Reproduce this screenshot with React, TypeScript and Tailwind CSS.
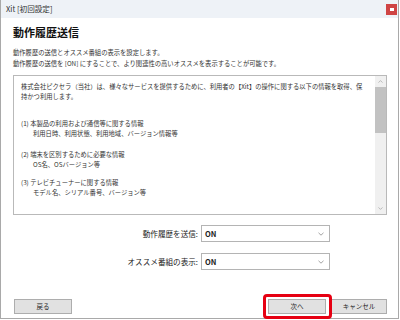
import React from 'react';

const Chevron: React.FC = () => (
  <svg width="6" height="4" viewBox="0 0 6 4" className="text-[#8a8a8a]">
    <path d="M0.5 0.8 L3 3.2 L5.5 0.8" fill="none" stroke="currentColor" strokeWidth="0.8" />
  </svg>
);

const SelectBox: React.FC<{ label: string; value: string }> = ({ label, value }) => (
  <div className="flex items-center justify-end pr-[68px]">
    <span className="text-[7.6px] text-[#222] mr-[3px]">{label}</span>
    <div className="w-[129px] h-[17px] border border-[#b4b4b4] bg-white flex items-center justify-between pl-[3px] pr-[5px]">
      <span className="text-[7.5px] font-bold text-[#222]">{value}</span>
      <Chevron />
    </div>
  </div>
);

const Btn: React.FC<{ children: React.ReactNode; w: string }> = ({ children, w }) => (
  <div className={`${w} h-[15px] bg-[#e1e1e1] border border-[#adadad] flex items-center justify-center text-[6.5px] text-[#222]`}>
    {children}
  </div>
);

const App: React.FC = () => {
  return (
    <div className="w-[400px] h-[320px] bg-white font-['Noto_Sans_CJK_JP',sans-serif] text-[#333] overflow-hidden">
      <div className="w-[399px] h-[319px] border-l border-r border-b border-[#a9a9a9] flex flex-col">
        {/* title bar */}
        <div className="h-[18px] bg-[#eef2f7] flex items-center justify-between pl-[5px] pr-[1px]">
          <span className="text-[7.6px] text-[#333]">Xit [初回設定]</span>
          <div className="w-[11px] h-[11px] bg-[#cf4444] flex items-center justify-center">
            <div className="w-[4px] h-[3px] bg-white" />
          </div>
        </div>

        <div className="px-[12px] flex flex-col">
          <h1 className="mt-[9px] text-[11px] leading-[11px] font-bold text-[#111]">動作履歴送信</h1>
          <div className="mt-[9px] text-[6.3px] leading-[11px] text-[#333] whitespace-nowrap">
            <div>動作履歴の送信とオススメ番組の表示を設定します。</div>
            <div>動作履歴の送信を [ON] にすることで、より関連性の高いオススメを表示することが可能です。</div>
          </div>

          {/* text box */}
          <div className="mt-[6px] h-[140px] w-[374px] border border-[#b9b9b9] flex">
            <div className="flex-1 pl-[7px] pt-[6px] text-[6.3px] leading-[10px] text-[#333] whitespace-nowrap">
              <div>株式会社ピクセラ（当社）は、様々なサービスを提供するために、利用者の【Xit】の操作に関する以下の情報を取得、保</div>
              <div>持かつ利用します。</div>
              <div className="mt-[17px]">(1) 本製品の利用および通信等に関する情報</div>
              <div className="pl-[12px]">利用日時、利用状態、利用地域、バージョン情報等</div>
              <div className="mt-[11px]">(2) 端末を区別するために必要な情報</div>
              <div className="pl-[12px]">OS名、OSバージョン等</div>
              <div className="mt-[8px]">(3) テレビチューナーに関する情報</div>
              <div className="pl-[12px]">モデル名、シリアル番号、バージョン等</div>
            </div>
            <div className="w-[11px] bg-[#f0f0f0] flex flex-col items-center">
              <div className="h-[11px] flex items-center justify-center">
                <svg width="5" height="3" viewBox="0 0 5 3"><path d="M0.5 2.6 L2.5 0.6 L4.5 2.6" fill="none" stroke="#a3a3a3" strokeWidth="0.7" /></svg>
              </div>
              <div className="w-[11px] h-[46px] bg-[#c2c2c2]" />
              <div className="flex-1" />
              <div className="h-[11px] flex items-center justify-center">
                <svg width="5" height="3" viewBox="0 0 5 3"><path d="M0.5 0.4 L2.5 2.4 L4.5 0.4" fill="none" stroke="#a3a3a3" strokeWidth="0.7" /></svg>
              </div>
            </div>
          </div>
        </div>

        <div className="mt-[10px] flex flex-col gap-[11px]">
          <SelectBox label="動作履歴を送信:" value="ON" />
          <SelectBox label="オススメ番組の表示:" value="ON" />
        </div>

        <div className="mt-[29px] flex items-center pl-[13px] pr-[11px]">
          <Btn w="w-[58px]">戻る</Btn>
          <div className="flex-1" />
          <div className="relative">
            <Btn w="w-[58px]">次へ</Btn>
            <div className="absolute left-[-5px] right-[-6px] top-[-5px] bottom-[-5px] border-[3px] border-[#e60012] rounded-[4px]" />
          </div>
          <div className="ml-[5px]">
            <Btn w="w-[56px]">キャンセル</Btn>
          </div>
        </div>
      </div>
    </div>
  );
};

export default App;
